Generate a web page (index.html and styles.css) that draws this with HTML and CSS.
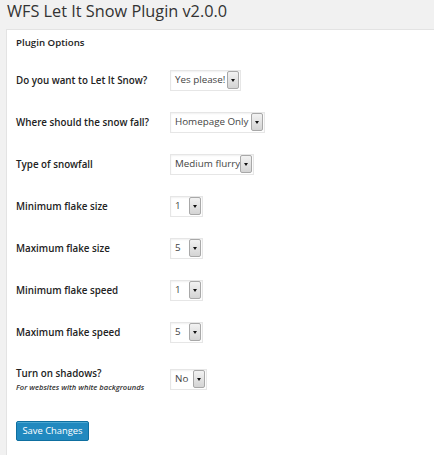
FILE: index.html
```html
<!DOCTYPE html>
<html>
<head>
<meta charset="utf-8">
<link rel="stylesheet" href="styles.css">
</head>
<body>
<h1 class="title">WFS Let It Snow Plugin v2.0.0</h1>
<div class="card">
  <div class="card-head">Plugin Options</div>
  <div class="form">
    <div class="row">
      <div class="label">Do you want to Let It Snow?</div>
      <div class="select w-yes"><span class="val">Yes please!</span><span class="arrow"></span></div>
    </div>
    <div class="row">
      <div class="label">Where should the snow fall?</div>
      <div class="select w-home"><span class="val">Homepage Only</span><span class="arrow"></span></div>
    </div>
    <div class="row">
      <div class="label">Type of snowfall</div>
      <div class="select w-med"><span class="val">Medium flurry</span><span class="arrow"></span></div>
    </div>
    <div class="row">
      <div class="label">Minimum flake size</div>
      <div class="select w-num"><span class="val">1</span><span class="arrow"></span></div>
    </div>
    <div class="row">
      <div class="label">Maximum flake size</div>
      <div class="select w-num"><span class="val">5</span><span class="arrow"></span></div>
    </div>
    <div class="row">
      <div class="label">Minimum flake speed</div>
      <div class="select w-num"><span class="val">1</span><span class="arrow"></span></div>
    </div>
    <div class="row">
      <div class="label">Maximum flake speed</div>
      <div class="select w-num"><span class="val">5</span><span class="arrow"></span></div>
    </div>
    <div class="row row-tall">
      <div class="label">Turn on shadows?<div class="hint">For websites with white backgrounds</div></div>
      <div class="select w-no"><span class="val">No</span><span class="arrow"></span></div>
    </div>
  </div>
  <div class="actions"><button class="btn">Save Changes</button></div>
</div>
</body>
</html>
```
FILE: styles.css
```css
html, body {
  margin: 0;
  padding: 0;
  background: #f1f1f1;
  font-family: "Open Sans", "Noto Sans", sans-serif;
  color: #222;
}
.title {
  margin: 0;
  padding: 0 0 0 7px;
  height: 29px;
  font-size: 16.3px;
  font-weight: 400;
  line-height: 22px;
  color: #333;
}
.card {
  margin-left: 6px;
  background: #fff;
  border: 1px solid #e3e3e3;
  border-right: none;
  padding: 0 9px;
  height: 440px;
  box-sizing: border-box;
}
.card-head {
  height: 29px;
  padding-top: 5px;
  box-sizing: border-box;
  font-size: 9.7px;
  font-weight: 600;
  line-height: 16px;
  color: #222;
}
.form {
  display: flex;
  flex-direction: column;
}
.row {
  display: grid;
  grid-template-columns: 154px auto;
  align-items: center;
  height: 42px;
}
.row-tall {
  height: 52px;
}
.label {
  font-size: 9.8px;
  font-weight: 600;
  line-height: 15px;
  color: #222;
}
.hint {
  font-size: 7.6px;
  font-style: italic;
  font-weight: 600;
  line-height: 12px;
  color: #333;
}
.select {
  display: flex;
  align-items: center;
  justify-content: space-between;
  height: 21px;
  box-sizing: border-box;
  border: 1px solid #e6e6e6;
  box-shadow: inset 0 1px 2px rgba(0,0,0,0.06);
  background: #fff;
  padding-left: 4px;
  padding-right: 1px;
  font-size: 9.8px;
  color: #444;
}
.w-yes { width: 71px; }
.w-home { width: 95px; }
.w-med { width: 84px; }
.w-num { width: 33px; }
.w-no { width: 37px; }
.val {
  white-space: nowrap;
  line-height: 16px;
}
.arrow {
  position: relative;
  width: 12px;
  height: 18px;
  box-sizing: border-box;
  border: 1px solid #a8a8a8;
  border-radius: 2px;
  background: linear-gradient(#f2f2f2, #d4d4d4);
  flex: none;
}
.arrow::after {
  content: "";
  position: absolute;
  left: 3px;
  top: 7px;
  border-left: 2.5px solid transparent;
  border-right: 2.5px solid transparent;
  border-top: 3px solid #111;
}
.actions {
  padding-top: 16px;
}
.btn {
  display: block;
  margin: 0;
  width: 73px;
  height: 20px;
  padding: 0;
  border: 1px solid #0e6fa0;
  border-radius: 2px;
  background: #2189bf;
  color: #fff;
  font-family: "Open Sans", "Noto Sans", sans-serif;
  font-size: 9.4px;
  line-height: 18px;
  box-shadow: inset 0 1px 0 rgba(120,200,230,0.5);
}
```
